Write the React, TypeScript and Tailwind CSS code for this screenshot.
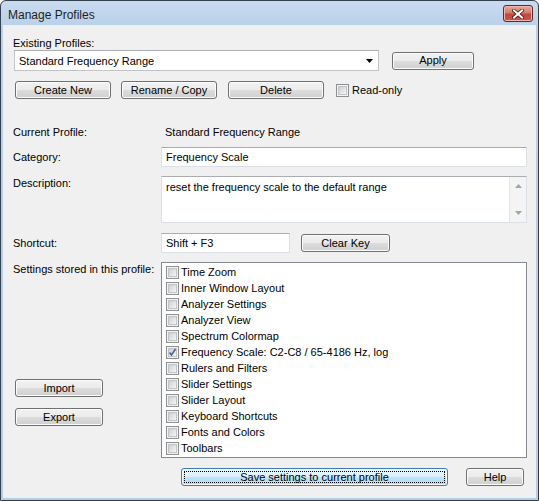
import React from "react";

const FONT = { fontFamily: "'Liberation Sans', Arial, sans-serif" };

const settings = [
  { label: "Time Zoom", checked: false },
  { label: "Inner Window Layout", checked: false },
  { label: "Analyzer Settings", checked: false },
  { label: "Analyzer View", checked: false },
  { label: "Spectrum Colormap", checked: false },
  { label: "Frequency Scale: C2-C8 / 65-4186 Hz, log", checked: true },
  { label: "Rulers and Filters", checked: false },
  { label: "Slider Settings", checked: false },
  { label: "Slider Layout", checked: false },
  { label: "Keyboard Shortcuts", checked: false },
  { label: "Fonts and Colors", checked: false },
  { label: "Toolbars", checked: false },
];

function Button({ children, className = "", focused = false }: { children: React.ReactNode; className?: string; focused?: boolean }) {
  if (focused) {
    return (
      <div
        className={`flex rounded-[3px] border border-[#3c7fb1] p-[2px] shadow-[inset_0_0_0_1px_#f4fbfe] bg-[linear-gradient(to_bottom,#eaf6fd_0%,#d9f0fc_50%,#bee6fd_50%,#a7d9f5_100%)] ${className}`}
      >
        <div className="flex flex-1 items-center justify-center border border-dotted border-[#000]">{children}</div>
      </div>
    );
  }
  return (
    <div
      className={`flex items-center justify-center rounded-[3px] border border-[#707070] shadow-[inset_0_0_0_1px_#fcfcfc] bg-[linear-gradient(to_bottom,#f2f2f2_0%,#ebebeb_50%,#dddddd_50%,#cfcfcf_100%)] ${className}`}
    >
      {children}
    </div>
  );
}

function CheckBox({ checked = false }: { checked?: boolean }) {
  return (
    <div className="flex h-[13px] w-[13px] shrink-0 border border-[#8e8f8f] bg-[#f4f4f4] p-[1px]">
      <div className="relative flex-1 border border-[#c0c3c7] bg-[linear-gradient(135deg,#cbcdd0_0%,#e4e4e4_55%,#f6f6f6_100%)]">
        {checked && (
          <svg className="absolute left-[-1px] top-[-1px]" width="9" height="9" viewBox="0 0 9 9">
            <path d="M1.5 4.5 L3.5 7 L7.5 1" fill="none" stroke="#4a5f97" strokeWidth="1.6" />
          </svg>
        )}
      </div>
    </div>
  );
}

function TextBox({ children, className = "" }: { children?: React.ReactNode; className?: string }) {
  return (
    <div
      className={`flex items-center border border-[#dbdfe6] border-t-[#abadb3] bg-white pl-[4px] pt-[1px] ${className}`}
    >
      {children}
    </div>
  );
}

export default function App() {
  return (
    <div className="w-[539px] h-[501px] text-[11px] leading-[13px] text-black" style={FONT}>
      <div className="flex h-full w-full flex-col rounded-t-[6px] border border-[#34404e] bg-[linear-gradient(to_bottom,#c9dbef_0px,#b9d1ea_24px,#b3cde9_100%)]">
        {/* title bar */}
        <div className="flex h-[24px] shrink-0 items-start justify-between">
          <div className="mt-[7px] ml-[7px] text-[12px] leading-[14px] text-[#1e1e1e]">Manage Profiles</div>
          <div className="mt-[4px] mr-[5px] flex h-[17px] w-[30px] items-center justify-center rounded-[3px] border border-[#5d2a2a] bg-[linear-gradient(to_bottom,#e8a89e_0%,#d47a6c_45%,#c4453a_55%,#c9574a_100%)] shadow-[inset_0_0_0_1px_#efb8ae]">
            <svg width="12" height="10" viewBox="0 0 12 10">
              <path d="M2 1.5 L10 8.5 M10 1.5 L2 8.5" stroke="#4a1c1c" strokeWidth="3.6" strokeLinecap="square" />
              <path d="M2 1.5 L10 8.5 M10 1.5 L2 8.5" stroke="#ffffff" strokeWidth="2" strokeLinecap="square" />
            </svg>
          </div>
        </div>

        {/* client area */}
        <div className="mx-[2px] mb-[2px] flex flex-1 flex-col bg-[#f0f0f0]">
          <div className="mt-[12px] ml-[10px] h-[13px]">Existing Profiles:</div>

          <div className="flex items-center">
            <div className="ml-[11px] flex h-[21px] w-[365px] items-center justify-between border border-[#c3c3c3] border-t-[#abadb3] bg-white pl-[4px] pt-[1px]">
              <span>Standard Frequency Range</span>
              <svg className="mr-[5px]" width="7" height="4" viewBox="0 0 7 4">
                <path d="M0 0 H7 L3.5 4 Z" fill="#000" />
              </svg>
            </div>
            <Button className="ml-[13px] h-[18px] w-[82px]">Apply</Button>
          </div>

          <div className="mt-[10px] flex h-[18px] items-center">
            <Button className="ml-[12px] h-[18px] w-[96px]">Create New</Button>
            <Button className="ml-[10px] h-[18px] w-[96px]">Rename / Copy</Button>
            <Button className="ml-[11px] h-[18px] w-[96px]">Delete</Button>
            <div className="ml-[12px]">
              <CheckBox />
            </div>
            <span className="ml-[3px]">Read-only</span>
          </div>

          <div className="mt-[27px] flex h-[13px]">
            <span className="ml-[10px] w-[148px]">Current Profile:</span>
            <span className="pl-[4px]">Standard Frequency Range</span>
          </div>

          <div className="mt-[8px] flex items-center">
            <span className="ml-[10px] w-[148px]">Category:</span>
            <TextBox className="h-[20px] w-[366px]">Frequency Scale</TextBox>
          </div>

          <div className="mt-[9px] flex items-start">
            <span className="ml-[10px] mt-[1px] w-[148px]">Description:</span>
            <div className="flex h-[47px] w-[366px] border border-[#dbdfe6] border-t-[#abadb3] bg-white">
              <div className="flex-1 pl-[4px] pt-[4px]">reset the frequency scale to the default range</div>
              <div className="flex w-[17px] flex-col items-center justify-between border-l border-[#e6e6e6] bg-[#f4f4f4] py-[7px]">
                <svg width="7" height="4" viewBox="0 0 7 4">
                  <path d="M0 4 H7 L3.5 0 Z" fill="#a3a3a3" />
                </svg>
                <svg width="7" height="4" viewBox="0 0 7 4">
                  <path d="M0 0 H7 L3.5 4 Z" fill="#a3a3a3" />
                </svg>
              </div>
            </div>
          </div>

          <div className="mt-[10px] flex items-center">
            <span className="ml-[10px] w-[148px]">Shortcut:</span>
            <TextBox className="h-[20px] w-[129px]">Shift + F3</TextBox>
            <Button className="ml-[11px] h-[18px] w-[89px]">Clear Key</Button>
          </div>

          <div className="mt-[9px] flex items-start">
            <div className="flex w-[158px] flex-col">
              <span className="ml-[10px] mt-[1px] h-[13px]">Settings stored in this profile:</span>
              <Button className="ml-[12px] mt-[103px] h-[18px] w-[88px]">Import</Button>
              <Button className="ml-[12px] mt-[11px] h-[18px] w-[88px]">Export</Button>
            </div>
            <div className="flex h-[196px] w-[366px] flex-col border border-[#828790] bg-white pt-[1px]">
              {settings.map((s) => (
                <div key={s.label} className="flex h-[16px] items-center pl-[4px]">
                  <CheckBox checked={s.checked} />
                  <span className="ml-[2px]">{s.label}</span>
                </div>
              ))}
            </div>
          </div>

          <div className="mt-[10px] flex items-center">
            <Button focused className="ml-[178px] h-[18px] w-[267px]">Save settings to current profile</Button>
            <Button className="ml-[18px] h-[18px] w-[58px]">Help</Button>
          </div>
        </div>
      </div>
    </div>
  );
}
